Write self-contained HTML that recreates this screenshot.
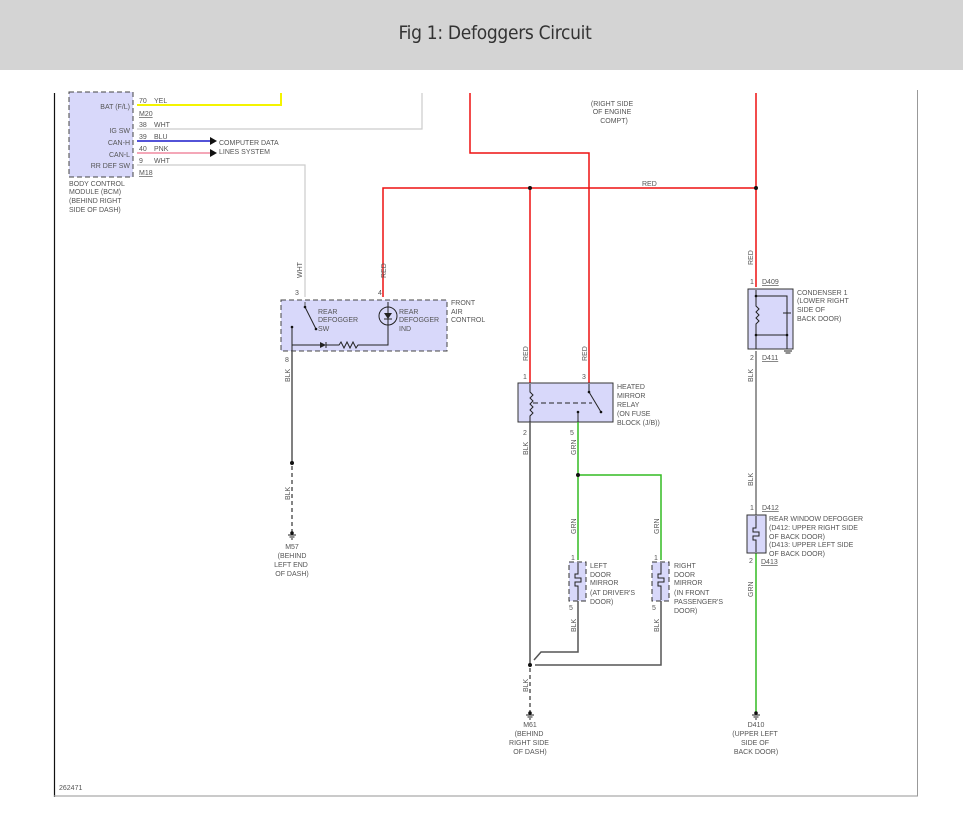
<!DOCTYPE html>
<html><head><meta charset="utf-8"><style>
html,body{margin:0;padding:0;background:#fff;}
.hd{position:absolute;left:0;top:0;width:963px;height:70px;background:#d4d4d4;}
.hd span{position:absolute;left:0;width:990px;top:22px;text-align:center;font:19px "DejaVu Sans Condensed","Liberation Sans",sans-serif;color:#333;letter-spacing:-0.3px}
svg{position:absolute;left:0;top:0}
text{font-family:"Liberation Sans",sans-serif;font-size:7px;fill:#555}
</style></head><body>
<div class="hd"><span>Fig 1: Defoggers Circuit</span></div>
<svg width="963" height="828" viewBox="0 0 963 828">
<!-- frame -->
<line x1="54.5" y1="93" x2="54.5" y2="797" stroke="#111" stroke-width="1.2"/>
<line x1="54" y1="796" x2="918" y2="796" stroke="#aaa" stroke-width="1.2"/>
<line x1="917.5" y1="90" x2="917.5" y2="796" stroke="#999" stroke-width="1"/>
<text x="59" y="790" font-size="6.5">262471</text>

<!-- BCM -->
<rect x="69" y="92" width="64" height="85" fill="#d8d8fa" stroke="#444" stroke-dasharray="5,3"/>
<text x="130" y="109" text-anchor="end">BAT (F/L)</text>
<text x="130" y="133" text-anchor="end">IG SW</text>
<text x="130" y="145" text-anchor="end">CAN-H</text>
<text x="130" y="157" text-anchor="end">CAN-L</text>
<text x="130" y="168" text-anchor="end">RR DEF SW</text>
<text x="69" y="186">BODY CONTROL</text>
<text x="69" y="194">MODULE (BCM)</text>
<text x="69" y="203">(BEHIND RIGHT</text>
<text x="69" y="212">SIDE OF DASH)</text>
<polyline points="137,105 281,105 281,93" fill="none" stroke="#f4f400" stroke-width="2"/>
<polyline points="137,129 422,129 422,93" fill="none" stroke="#ccc" stroke-width="1.2"/>
<line x1="137" y1="141" x2="210" y2="141" stroke="#1a1acc" stroke-width="1.5"/>
<line x1="137" y1="153" x2="210" y2="153" stroke="#f08aa0" stroke-width="1.5"/>
<polygon points="210,137 217,141 210,145" fill="#111"/>
<polygon points="210,149 217,153 210,157" fill="#111"/>
<polyline points="137,165 305,165 305,297" fill="none" stroke="#ccc" stroke-width="1.2"/>
<text x="139" y="103">70</text><text x="154" y="103">YEL</text>
<text x="139" y="116" text-decoration="underline">M20</text>
<text x="139" y="127">38</text><text x="154" y="127">WHT</text>
<text x="139" y="139">39</text><text x="154" y="139">BLU</text>
<text x="139" y="151">40</text><text x="154" y="151">PNK</text>
<text x="139" y="163">9</text><text x="154" y="163">WHT</text>
<text x="139" y="175" text-decoration="underline">M18</text>
<text x="219" y="145">COMPUTER DATA</text>
<text x="219" y="154">LINES SYSTEM</text>

<!-- red wires -->
<g stroke="#ee1111" stroke-width="1.5" fill="none">
<polyline points="470,93 470,153 589,153 589,383"/>
<line x1="756" y1="93" x2="756" y2="287"/>
<polyline points="383,297 383,188 756,188"/>
<line x1="530" y1="188" x2="530" y2="383"/>
</g>
<circle cx="530" cy="188" r="2" fill="#111"/><circle cx="756" cy="188" r="2" fill="#111"/>
<text x="642" y="186">RED</text>
<text x="612" y="106" text-anchor="middle">(RIGHT SIDE</text>
<text x="612" y="114" text-anchor="middle">OF ENGINE</text>
<text x="614" y="123" text-anchor="middle">COMPT)</text>

<!-- vertical labels -->
<g font-size="6.5">
<text transform="translate(302,278) rotate(-90)">WHT</text>
<text transform="translate(386,278) rotate(-90)">RED</text>
<text transform="translate(290,382) rotate(-90)">BLK</text>
<text transform="translate(290,500) rotate(-90)">BLK</text>
<text transform="translate(528,361) rotate(-90)">RED</text>
<text transform="translate(587,361) rotate(-90)">RED</text>
<text transform="translate(753,265) rotate(-90)">RED</text>
<text transform="translate(753,382) rotate(-90)">BLK</text>
<text transform="translate(753,486) rotate(-90)">BLK</text>
<text transform="translate(753,597) rotate(-90)">GRN</text>
<text transform="translate(528,455) rotate(-90)">BLK</text>
<text transform="translate(576,455) rotate(-90)">GRN</text>
<text transform="translate(576,534) rotate(-90)">GRN</text>
<text transform="translate(659,534) rotate(-90)">GRN</text>
<text transform="translate(576,632) rotate(-90)">BLK</text>
<text transform="translate(659,632) rotate(-90)">BLK</text>
<text transform="translate(528,692) rotate(-90)">BLK</text>
</g>

<!-- front air control -->
<rect x="281" y="300" width="166" height="51" fill="#d8d8fa" stroke="#444" stroke-dasharray="5,3"/>
<text x="295" y="295">3</text><text x="378" y="295">4</text><text x="285" y="362">8</text>
<line x1="305" y1="302" x2="305" y2="307" stroke="#555"/>
<line x1="305" y1="307" x2="316" y2="329" stroke="#222"/>
<circle cx="305" cy="307" r="1.3" fill="#111"/><circle cx="316" cy="329" r="1.3" fill="#111"/>
<line x1="292" y1="327" x2="292" y2="355" stroke="#222"/>
<circle cx="292" cy="327" r="1.3" fill="#111"/>
<polyline points="292,345 320,345" stroke="#222" fill="none"/>
<polygon points="320,342 326,345 320,348" fill="#222"/>
<line x1="326" y1="342" x2="326" y2="348" stroke="#222"/>
<polyline points="326,345 339,345 341,342 344,348 347,342 350,348 353,342 356,348 358,345 388,345 388,302" stroke="#222" fill="none"/>
<circle cx="388" cy="316" r="9" fill="none" stroke="#222"/>
<polygon points="384,313 392,313 388,319" fill="#222"/>
<line x1="384" y1="319" x2="392" y2="319" stroke="#222"/>
<text x="318" y="314">REAR</text><text x="318" y="322">DEFOGGER</text><text x="318" y="331">SW</text>
<text x="399" y="314">REAR</text><text x="399" y="322">DEFOGGER</text><text x="399" y="331">IND</text>
<text x="451" y="305">FRONT</text><text x="451" y="314">AIR</text><text x="451" y="322">CONTROL</text>
<line x1="292" y1="351" x2="292" y2="463" stroke="#555" stroke-width="1.5"/>
<circle cx="292" cy="463" r="2" fill="#111"/>
<line x1="292" y1="466" x2="292" y2="533" stroke="#333" stroke-width="1.2" stroke-dasharray="4,3"/>
<g stroke="#222"><line x1="288" y1="535" x2="296" y2="535"/><line x1="289.5" y1="537" x2="294.5" y2="537"/><line x1="291" y1="539" x2="293" y2="539"/></g>
<circle cx="292" cy="533" r="1.8" fill="#111"/>
<text x="292" y="549" text-anchor="middle">M57</text>
<text x="292" y="558" text-anchor="middle">(BEHIND</text>
<text x="291" y="567" text-anchor="middle">LEFT END</text>
<text x="292" y="576" text-anchor="middle">OF DASH)</text>

<!-- relay -->
<rect x="518" y="383" width="95" height="39" fill="#d8d8fa" stroke="#333"/>
<text x="523" y="379">1</text><text x="582" y="379">3</text>
<text x="523" y="435">2</text><text x="570" y="435">5</text>
<polyline points="530,384 530,392 533,395 530,398 533,401 530,404 533,407 530,410 533,413 530,416 530,422" fill="none" stroke="#222"/>
<line x1="533" y1="403" x2="592" y2="403" stroke="#222" stroke-dasharray="5,3"/>
<line x1="589" y1="384" x2="589" y2="392" stroke="#222"/>
<line x1="589" y1="392" x2="601" y2="412" stroke="#222"/>
<circle cx="589" cy="392" r="1.3" fill="#111"/><circle cx="601" cy="412" r="1.3" fill="#111"/>
<line x1="578" y1="412" x2="578" y2="422" stroke="#222"/><circle cx="578" cy="412" r="1.3" fill="#111"/>
<text x="617" y="389">HEATED</text><text x="617" y="398">MIRROR</text><text x="617" y="407">RELAY</text><text x="617" y="416">(ON FUSE</text><text x="617" y="425">BLOCK (J/B))</text>

<!-- green -->
<g stroke="#33bb22" stroke-width="1.5" fill="none">
<polyline points="578,422 578,560"/>
<polyline points="578,475 661,475 661,560"/>
<polyline points="756,553 756,712"/>
</g>
<circle cx="578" cy="475" r="2" fill="#111"/>

<!-- mirrors -->
<rect x="569" y="562" width="17" height="39" fill="#d8d8fa" stroke="#333" stroke-dasharray="5,3"/>
<rect x="652" y="562" width="17" height="39" fill="#d8d8fa" stroke="#333" stroke-dasharray="5,3"/>
<g fill="none" stroke="#222">
<polyline points="578,563 578,574 575,574 575,578 581,578 581,582 575,582 575,586 578,586 578,600"/>
<polyline points="661,563 661,574 658,574 658,578 664,578 664,582 658,582 658,586 661,586 661,600"/>
</g>
<text x="571" y="560">1</text><text x="654" y="560">1</text>
<text x="569" y="610">5</text><text x="652" y="610">5</text>
<text x="590" y="568">LEFT</text><text x="590" y="577">DOOR</text><text x="590" y="585">MIRROR</text><text x="590" y="595">(AT DRIVER'S</text><text x="590" y="604">DOOR)</text>
<text x="674" y="568">RIGHT</text><text x="674" y="577">DOOR</text><text x="674" y="585">MIRROR</text><text x="674" y="595">(IN FRONT</text><text x="674" y="604">PASSENGER'S</text><text x="674" y="613">DOOR)</text>

<!-- blk grounds -->
<g stroke="#555" stroke-width="1.5" fill="none">
<line x1="530" y1="422" x2="530" y2="665"/>
<polyline points="578,601 578,652 541,652 534,660"/>
<polyline points="661,601 661,665 535,665"/>
</g>
<circle cx="530" cy="665" r="2" fill="#111"/>
<line x1="530" y1="668" x2="530" y2="712" stroke="#333" stroke-width="1.2" stroke-dasharray="4,3"/>
<circle cx="530" cy="713" r="1.8" fill="#111"/>
<g stroke="#222"><line x1="526" y1="715" x2="534" y2="715"/><line x1="527.5" y1="717" x2="532.5" y2="717"/><line x1="529" y1="719" x2="531" y2="719"/></g>
<text x="530" y="727" text-anchor="middle">M61</text>
<text x="529" y="736" text-anchor="middle">(BEHIND</text>
<text x="529" y="745" text-anchor="middle">RIGHT SIDE</text>
<text x="530" y="754" text-anchor="middle">OF DASH)</text>

<!-- condenser -->
<rect x="748" y="289" width="45" height="60" fill="#d8d8fa" stroke="#333"/>
<polyline points="756,290 756,296 787,296 787,349" fill="none" stroke="#222"/>
<polyline points="756,296 756,306 759,309 756,312 759,315 756,318 759,321 756,324 756,349" fill="none" stroke="#222"/>
<line x1="756" y1="335" x2="787" y2="335" stroke="#222"/>
<line x1="783" y1="313" x2="791" y2="313" stroke="#222"/>
<circle cx="756" cy="296" r="1.3" fill="#111"/><circle cx="756" cy="335" r="1.3" fill="#111"/><circle cx="787" cy="335" r="1.3" fill="#111"/>
<g stroke="#222"><line x1="784" y1="351" x2="792" y2="351"/><line x1="785.5" y1="353" x2="790.5" y2="353"/></g>
<text x="750" y="284">1</text><text x="762" y="284" text-decoration="underline">D409</text>
<text x="750" y="360">2</text><text x="762" y="360" text-decoration="underline">D411</text>
<text x="797" y="295">CONDENSER 1</text><text x="797" y="303">(LOWER RIGHT</text><text x="797" y="312">SIDE OF</text><text x="797" y="321">BACK DOOR)</text>
<line x1="756" y1="351" x2="756" y2="515" stroke="#777" stroke-width="1.5"/>

<!-- defogger -->
<rect x="747" y="515" width="19" height="38" fill="#d8d8fa" stroke="#333"/>
<polyline points="756,516 756,528 753,528 753,532 759,532 759,536 753,536 753,540 756,540 756,552" fill="none" stroke="#222"/>
<text x="750" y="510">1</text><text x="762" y="510" text-decoration="underline">D412</text>
<text x="749" y="563">2</text><text x="761" y="564" text-decoration="underline">D413</text>
<text x="769" y="521">REAR WINDOW DEFOGGER</text><text x="769" y="530">(D412: UPPER RIGHT SIDE</text><text x="769" y="539">OF BACK DOOR)</text><text x="769" y="547">(D413: UPPER LEFT SIDE</text><text x="769" y="556">OF BACK DOOR)</text>
<circle cx="756" cy="713" r="1.8" fill="#111"/>
<g stroke="#222"><line x1="752" y1="715" x2="760" y2="715"/><line x1="753.5" y1="717" x2="758.5" y2="717"/><line x1="755" y1="719" x2="757" y2="719"/></g>
<text x="756" y="727" text-anchor="middle">D410</text>
<text x="755" y="736" text-anchor="middle">(UPPER LEFT</text>
<text x="755" y="745" text-anchor="middle">SIDE OF</text>
<text x="756" y="754" text-anchor="middle">BACK DOOR)</text>
</svg>
</body></html>
